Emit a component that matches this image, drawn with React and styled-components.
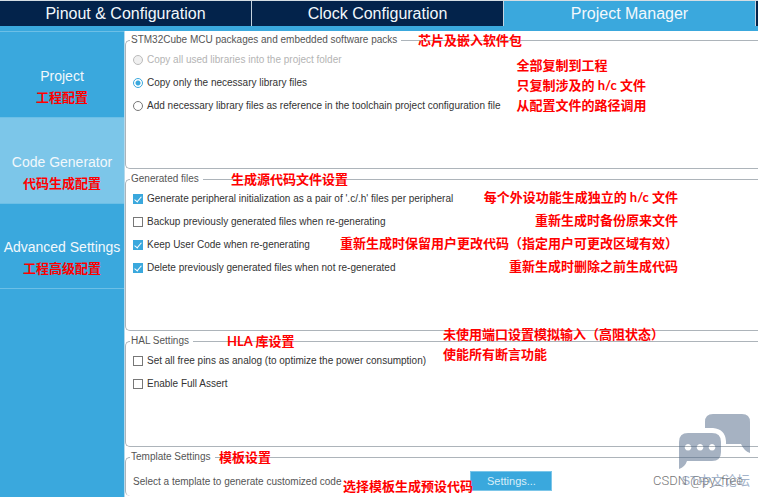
import styled, { createGlobalStyle } from 'styled-components'

function App() {
    return (
        <>
            <GlobalStyle />
            <Page>
                <Tabs>
                    <Tab type="button">Pinout &amp; Configuration</Tab>
                    <Tab type="button">Clock Configuration</Tab>
                    <Tab type="button" $active>Project Manager</Tab>
                </Tabs>
                <Body>
                    <Sidebar>
                        <SideItem type="button">
                            Project
                            <Note>工程配置</Note>
                        </SideItem>
                        <SideItem type="button" $active>
                            Code Generator
                            <Note>代码生成配置</Note>
                        </SideItem>
                        <SideItem type="button">
                            Advanced Settings
                            <Note>工程高级配置</Note>
                        </SideItem>
                    </Sidebar>
                    <Content>
                        <Group $height={136}>
                            <Legend>STM32Cube MCU packages and embedded software packs</Legend>
                            <LegendNote $left={292}>芯片及嵌入软件包</LegendNote>
                            <Columns>
                                <List>
                                    <Option>
                                        <Radio name="packages" disabled />
                                        Copy all used libraries into the project folder
                                    </Option>
                                    <Option>
                                        <Radio name="packages" defaultChecked />
                                        Copy only the necessary library files
                                    </Option>
                                    <Option>
                                        <Radio name="packages" />
                                        Add necessary library files as reference in the toolchain project configuration file
                                    </Option>
                                </List>
                                <Notes>
                                    <Note>全部复制到工程</Note>
                                    <Note>只复制涉及的 h/c 文件</Note>
                                    <Note>从配置文件的路径调用</Note>
                                </Notes>
                            </Columns>
                        </Group>
                        <Group $height={159}>
                            <Legend>Generated files</Legend>
                            <LegendNote $left={105}>生成源代码文件设置</LegendNote>
                            <List>
                                <Row>
                                    <Option>
                                        <Checkbox defaultChecked />
                                        Generate peripheral initialization as a pair of '.c/.h' files per peripheral
                                    </Option>
                                    <Note>每个外设功能生成独立的 h/c 文件</Note>
                                </Row>
                                <Row>
                                    <Option>
                                        <Checkbox />
                                        Backup previously generated files when re-generating
                                    </Option>
                                    <Note>重新生成时备份原来文件</Note>
                                </Row>
                                <Row>
                                    <Option>
                                        <Checkbox defaultChecked />
                                        Keep User Code when re-generating
                                    </Option>
                                    <Note>重新生成时保留用户更改代码（指定用户可更改区域有效）</Note>
                                </Row>
                                <Row>
                                    <Option>
                                        <Checkbox defaultChecked />
                                        Delete previously generated files when not re-generated
                                    </Option>
                                    <Note>重新生成时删除之前生成代码</Note>
                                </Row>
                            </List>
                        </Group>
                        <Group $height={113}>
                            <Legend>HAL Settings</Legend>
                            <LegendNote $left={101}>HLA 库设置</LegendNote>
                            <FloatingNotes>
                                <Note>未使用端口设置模拟输入（高阻状态）</Note>
                                <Note>使能所有断言功能</Note>
                            </FloatingNotes>
                            <List>
                                <Option>
                                    <Checkbox />
                                    Set all free pins as analog (to optimize the power consumption)
                                </Option>
                                <Option>
                                    <Checkbox />
                                    Enable Full Assert
                                </Option>
                            </List>
                        </Group>
                        <Group $height={46}>
                            <Legend>Template Settings</Legend>
                            <LegendNote $left={93}>模板设置</LegendNote>
                            <Template>
                                <TemplateText>
                                    Select a template to generate customized code
                                    <TemplateNote>选择模板生成预设代码</TemplateNote>
                                </TemplateText>
                                <SettingsButton type="button">Settings...</SettingsButton>
                            </Template>
                        </Group>
                    </Content>
                </Body>
                <Watermark>
                    <ChatIcon />
                    <Forum>ST中文论坛</Forum>
                    <Credit>CSDN @py_free</Credit>
                </Watermark>
            </Page>
        </>
    )
}

function ChatIcon() {
    return (
        <svg width="71" height="56" viewBox="0 0 71 56" fill="#4d6585" fillOpacity="0.5" aria-hidden="true">
            <path d="M26 14V8Q26 0 34 0H63Q71 0 71 8V39Q65 37 62 30H47V27Q46 15 34 14Z" />
            <path
                fillRule="evenodd"
                d="M9 19H33Q42 19 42 28V38Q42 47 33 47H8Q6 53 0 55V28Q0 19 9 19ZM9 30a3.3 3.3 0 1 0 .1 0ZM21 30a3.3 3.3 0 1 0 .1 0ZM33 30a3.3 3.3 0 1 0 .1 0Z"
            />
        </svg>
    )
}

const GlobalStyle = createGlobalStyle`
    *, *::after {
        box-sizing: border-box;
    }
    body {
        margin: 0;
        background: #fff;
        font-family: 'Liberation Sans', Arial, sans-serif;
    }
`
const Page = styled.div`
    position: relative;
    display: flex;
    flex-direction: column;
    min-height: 100vh;
    overflow: hidden;
`
const Tabs = styled.nav`
    display: grid;
    grid-template-columns: 1fr 1fr 1fr;
    padding-right: 2px;
    background: #03234b;
    border-top: 1px solid #d5dde3;
    border-bottom: 5px solid #3aa8dd;
`
const Tab = styled.button`
    height: 25px;
    padding: 1px 0 0;
    border: 0;
    border-right: 1px solid #c5d3df;
    background: ${props => props.$active ? '#3aa8dd' : '#03234b'};
    color: #f2f8fc;
    font-family: inherit;
    font-size: 16px;
    line-height: 24px;
`
const Body = styled.div`
    display: flex;
    flex: 1;
`
const Sidebar = styled.aside`
    flex: 0 0 125px;
    background: #3aa8dd;
    border-right: 1px solid #b5d9ec;
`
const SideItem = styled.button`
    display: flex;
    flex-direction: column;
    align-items: center;
    width: 100%;
    height: 86px;
    padding: 0 0 10px;
    justify-content: flex-end;
    border: 0;
    border-top: 1px solid #6cbfe6;
    background: ${props => props.$active ? '#7cc6e9' : '#3aa8dd'};
    color: #f2f8fc;
    font-family: inherit;
    font-size: 14px;
    line-height: 22px;
    white-space: nowrap;

    &:last-child {
        border-bottom: 1px solid #6cbfe6;
    }
`
const Content = styled.main`
    flex: 1;
    display: flex;
    flex-direction: column;
    gap: 3px;
    min-width: 0;
    padding: 2px 0 0;
`
const Group = styled.fieldset`
    position: relative;
    min-width: 0;
    min-height: ${props => props.$height}px;
    margin: 0;
    padding: 1px 0 0 7px;
    border: 1px solid #adb4ba;
    border-right: 0;
    border-radius: 5px 0 0 5px;
    color: #333;
    font-size: 10px;

    &:last-child {
        border-bottom: 0;
    }
`
const Legend = styled.legend`
    margin-left: -3px;
    padding: 0 4px 0 1px;
    color: #555;
    line-height: 14px;
`
const Note = styled.span`
    color: #f00;
    font-family: Lato, 'Noto Sans CJK SC', sans-serif;
    font-size: 13px;
    font-weight: bold;
    line-height: 20px;
    white-space: nowrap;
`
// sits on the top border of its group
const LegendNote = styled(Note)`
    position: absolute;
    top: -17px;
    left: ${props => props.$left}px;
`
const FloatingNotes = styled.div`
    position: absolute;
    top: -24px;
    left: 317px;
    display: flex;
    flex-direction: column;
`
const Columns = styled.div`
    display: flex;
    gap: 16px;
`
const List = styled.div`
    display: flex;
    flex-direction: column;
`
const Notes = styled.div`
    display: flex;
    flex-direction: column;
    padding-top: 7px;
`
const Row = styled.div`
    display: flex;
    justify-content: space-between;
    max-width: 545px;
`
const Option = styled.label`
    display: flex;
    align-items: center;
    gap: 4px;
    height: 23px;
    white-space: nowrap;

    &:has(input:disabled) {
        color: #b4b4b4;
    }
`
const Radio = styled.input.attrs({ type: 'radio' })`
    appearance: none;
    width: 10px;
    height: 10px;
    margin: 0;
    border: 1px solid #777;
    border-radius: 50%;
    background: #fff;

    &:checked {
        border-color: #3aa8dd;
        background: radial-gradient(circle, #3aa8dd 2px, #fff 3px);
    }
    &:disabled {
        border-color: #bbb;
        background: #f0f0f0;
    }
`
const Checkbox = styled.input.attrs({ type: 'checkbox' })`
    appearance: none;
    display: flex;
    justify-content: center;
    width: 10px;
    height: 10px;
    margin: 0;
    border: 1px solid #777;
    background: #fff;

    &:checked {
        border-color: #3aa8dd;
        background: #3aa8dd;
    }
    &:checked::after {
        content: '';
        width: 4px;
        height: 7px;
        border: solid #fff;
        border-width: 0 1px 1px 0;
        transform: rotate(40deg);
    }
`
const Template = styled.div`
    display: flex;
    align-items: center;
    gap: 129px;
    padding-top: 6px;
`
const TemplateText = styled.span`
    position: relative;
    color: #555;
    white-space: nowrap;
`
const TemplateNote = styled(Note)`
    position: absolute;
    top: 0;
    left: 210px;
    z-index: 1;
`
const SettingsButton = styled.button`
    width: 82px;
    height: 20px;
    padding: 0;
    border: 1px solid #7cc6e9;
    background: #3aa8dd;
    color: #d9eef8;
    font-family: inherit;
    font-size: 11px;
`
const Watermark = styled.div`
    position: absolute;
    right: 8px;
    bottom: 6px;
    display: grid;
    justify-items: end;
    row-gap: 1px;

    svg {
        grid-area: 1 / 1;
    }
`
const Forum = styled.span`
    grid-area: 2 / 1;
    color: #a3b3ca;
    font-family: 'Liberation Sans', 'Noto Sans CJK SC', sans-serif;
    font-size: 13px;
    line-height: 20px;
`
const Credit = styled.span`
    grid-area: 2 / 1;
    padding-right: 7px;
    color: #777;
    font-family: Roboto, sans-serif;
    font-size: 13px;
    font-weight: 300;
    line-height: 20px;
`
export default App;
